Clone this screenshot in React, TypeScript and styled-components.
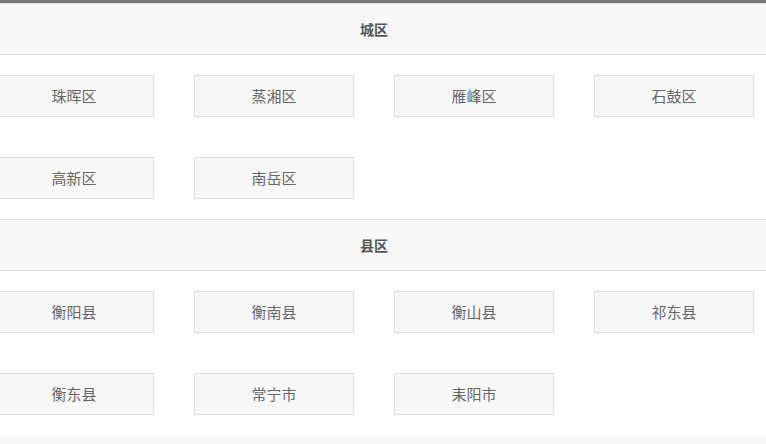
import React from "react";
import styled, { createGlobalStyle } from "styled-components";

const Global = createGlobalStyle`
  html, body { margin: 0; padding: 0; background: #fff; overflow: hidden; }
  body { font-family: "Noto Sans CJK SC", "Microsoft YaHei", sans-serif; }
`;

const TopBar = styled.div`
  height: 3px;
  background: #777;
`;

const Container = styled.div`
  width: 800px;
  margin-left: -26px;
`;

const Header = styled.div`
  height: 50px;
  line-height: 50px;
  text-align: center;
  background: #f7f7f7;
  border-top: 1px solid #ddd;
  border-bottom: 1px solid #ddd;
  font-size: 14px;
  font-weight: bold;
  color: #555;
`;

const Grid = styled.div`
  display: flex;
  flex-wrap: wrap;
`;

const Item = styled.div`
  box-sizing: border-box;
  width: 160px;
  height: 42px;
  line-height: 40px;
  margin: 20px;
  text-align: center;
  background: #f7f7f7;
  border: 1px solid #ddd;
  font-size: 15px;
  color: #666;
`;

const Footer = styled.div`
  height: 40px;
  background: #f7f7f7;
`;

const sections = [
  { title: "城区", items: ["珠晖区", "蒸湘区", "雁峰区", "石鼓区", "高新区", "南岳区"] },
  { title: "县区", items: ["衡阳县", "衡南县", "衡山县", "祁东县", "衡东县", "常宁市", "耒阳市"] },
];

export default function App() {
  return (
    <>
      <Global />
      <TopBar />
      <Container>
        {sections.map((s) => (
          <section key={s.title}>
            <Header>{s.title}</Header>
            <Grid>
              {s.items.map((it) => (
                <Item key={it}>{it}</Item>
              ))}
            </Grid>
          </section>
        ))}
        <Footer />
      </Container>
    </>
  );
}
